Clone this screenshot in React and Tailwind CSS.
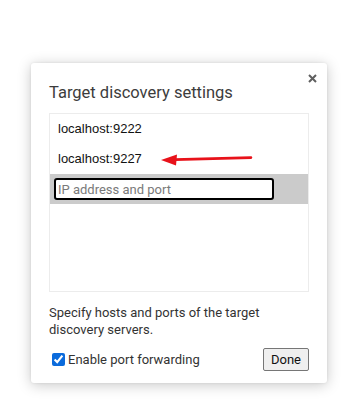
import React, { useState } from "react";

const App = () => {
  const [host, setHost] = useState("");
  const [forwarding, setForwarding] = useState(true);

  return (
    <div className="w-[364px] h-[420px] bg-white pt-[63px] pl-[31px] font-['Roboto',_'Liberation_Sans',_sans-serif]">
      <div className="relative w-[296px] h-[320px] bg-white rounded-[3px] shadow-[0_2px_14px_rgba(0,0,0,0.22),0_0_3px_rgba(0,0,0,0.08)] pt-[18px] px-[18px] pb-[11px] flex flex-col">
        <button className="absolute right-[8px] top-[8px] w-[14px] h-[14px] flex items-center justify-center text-[#5f5f5f]">
          <svg width="9" height="9" viewBox="0 0 9 9">
            <path d="M1 1L8 8M8 1L1 8" stroke="currentColor" strokeWidth="2" />
          </svg>
        </button>

        <h1 className="text-[16.5px] leading-[24px] text-[#3c3c3c] font-normal">Target discovery settings</h1>

        <div className="mt-[8px] h-[179px] border border-[#ececec] flex flex-col text-[13px] text-[#111] font-['Liberation_Sans',_sans-serif]">
          <div className="h-[30px] flex items-center pl-[8px]">localhost:9222</div>
          <div className="relative h-[30px] flex items-center pl-[8px]">
            localhost:9227
            <svg className="absolute left-[111px] top-[8px]" width="92" height="14" viewBox="0 0 92 14">
              <path d="M14 7.6L90 5.6" stroke="#e8121a" strokeWidth="2.6" strokeLinecap="round" />
              <path d="M0 8L16 2.4L15 13.4Z" fill="#e8121a" />
            </svg>
          </div>
          <div className="h-[30px] bg-[#cbcbcb] flex items-center pl-[4px]">
            <input
              value={host}
              onChange={(e) => setHost(e.target.value)}
              placeholder="IP address and port"
              className="w-[220px] h-[22px] bg-white border-2 border-black rounded-[3px] px-[2px] text-[13px] text-black placeholder:text-[#7a7a7a] outline-none font-['Roboto',_sans-serif]"
            />
          </div>
        </div>

        <p className="mt-[12px] text-[13px] leading-[17px] text-[#333]">
          Specify hosts and ports of the target
          <br />
          discovery servers.
        </p>

        <div className="mt-[10px] flex items-center justify-between">
          <label className="flex items-center gap-[3px] text-[13px] text-[#333] pl-[3px]">
            <input
              type="checkbox"
              checked={forwarding}
              onChange={(e) => setForwarding(e.target.checked)}
              className="w-[13px] h-[13px] accent-[#0b6bdc] m-0"
            />
            Enable port forwarding
          </label>
          <button className="w-[46px] h-[23px] border border-[#767676] rounded-[2px] bg-[#efefef] text-[13px] text-[#111]">
            Done
          </button>
        </div>
      </div>
    </div>
  );
};

export default App;
